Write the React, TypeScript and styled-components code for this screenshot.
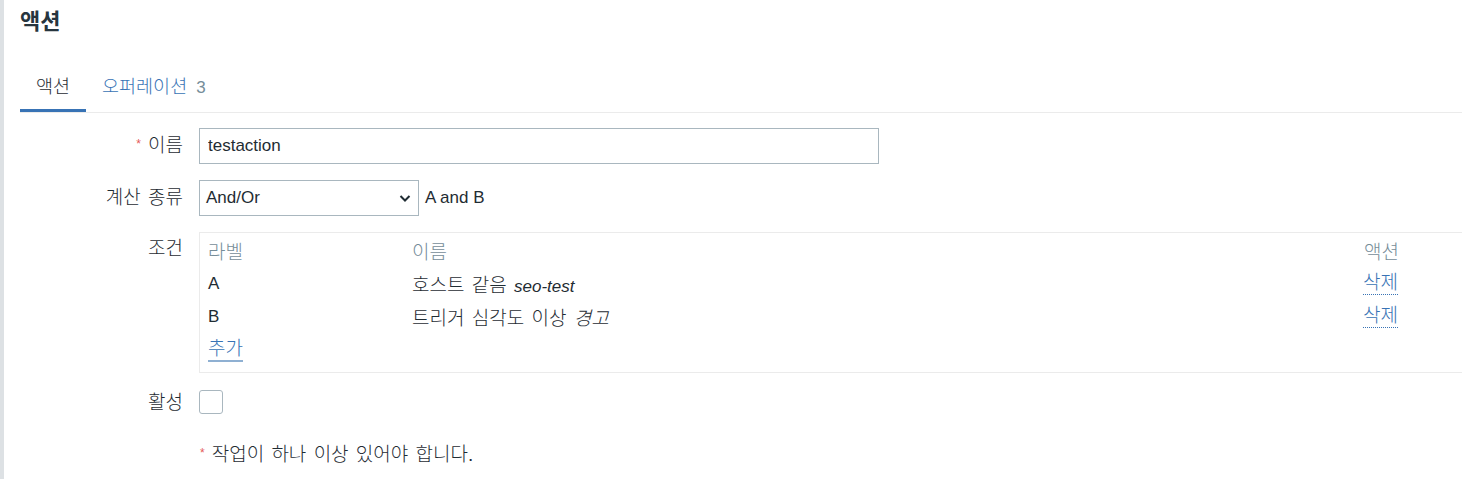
import React from "react";
import styled, { createGlobalStyle } from "styled-components";

const Global = createGlobalStyle`
  html, body { margin: 0; padding: 0; background: #fff; overflow: hidden; }
  body { font-family: "Liberation Sans", Arial, "Noto Sans CJK KR", sans-serif; color: #1f2c33; }
  * { box-sizing: border-box; }
`;

const Page = styled.div`
  display: flex;
  width: 1462px;
  height: 479px;
  overflow: hidden;
`;

const SideStrip = styled.div`
  width: 4px;
  flex: none;
  background: #dde1e4;
`;

const Main = styled.main`
  flex: 1;
  padding-left: 16px;
  min-width: 0;
`;

const Title = styled.h1`
  margin: 0;
  padding-top: 8px;
  height: 70px;
  font-size: 22px;
  line-height: 28px;
  font-weight: 700;
  color: #27353e;
`;

const TabList = styled.div`
  display: flex;
  border-bottom: 1px solid #ebebeb;
  height: 43px;
`;

const Tab = styled.div<{ $active?: boolean }>`
  padding: 0 16px 0 16px;
  font-size: 18.5px;
  font-weight: 300;
  line-height: 34px;
  word-spacing: 4px;
  color: ${(p) => (p.$active ? "#1f2c33" : "#3873b5")};
  border-bottom: 3px solid ${(p) => (p.$active ? "#3873b5" : "transparent")};
  height: 42px;
  white-space: nowrap;
`;

const Latin = styled.span<{ $gray?: boolean }>`
  font-size: 17px;
  font-weight: 400;
  color: ${(p) => (p.$gray ? "#768d99" : "inherit")};
`;

const Form = styled.div`
  display: grid;
  grid-template-columns: 163px 1fr;
  column-gap: 16px;
  row-gap: 16px;
  padding-top: 15px;
  align-items: start;
  font-size: 19px;
`;

const Label = styled.label<{ $h?: number }>`
  text-align: right;
  font-size: 19px;
  font-weight: 300;
  line-height: ${(p) => p.$h ?? 36}px;
  height: ${(p) => p.$h ?? 36}px;
  color: #1f2c33;
  white-space: nowrap;
  word-spacing: 2px;
`;

const Req = styled.span`
  color: #e45959;
  font-size: 12px;
  font-weight: 400;
  line-height: 0;
  position: relative;
  top: -4px;
  margin-right: 7px;
`;

const TextInput = styled.input`
  width: 680px;
  height: 36px;
  border: 1px solid #a9b7bf;
  border-radius: 0;
  padding: 0 8px;
  font-family: inherit;
  font-size: 17px;
  color: #1f2c33;
  outline: none;
  display: block;
`;

const InlineRow = styled.div`
  display: flex;
  align-items: center;
  gap: 6px;
  height: 36px;
`;

const SelectBox = styled.div`
  width: 220px;
  height: 36px;
  border: 1px solid #a9b7bf;
  display: flex;
  align-items: center;
  justify-content: space-between;
  padding: 0 6px 0 6px;
  font-size: 17px;
`;

const Plain = styled.span`
  font-size: 17px;
`;

const CondBox = styled.div`
  width: 1290px;
  height: 141px;
  border: 1px solid #ebebeb;
  border-right: none;
  padding: 0 8px;
`;

const CondRow = styled.div<{ $head?: boolean }>`
  display: grid;
  grid-template-columns: 204px 1fr 117px;
  height: ${(p) => (p.$head ? 34 : 33)}px;
  align-items: center;
  font-size: 19px;
  font-weight: 300;
  word-spacing: 2px;
  color: ${(p) => (p.$head ? "#768d99" : "#1f2c33")};
`;

const Em = styled.i`
  font-style: italic;
`;

const DelLink = styled.span`
  color: #3873b5;
  border-bottom: 1px dotted #3873b5;
  line-height: 22px;
  justify-self: start;
  margin-left: -1px;
`;

const AddLink = styled.span`
  color: #3873b5;
  border-bottom: 2px solid #8fb0d2;
  line-height: 23px;
  justify-self: start;
`;

const Check = styled.span`
  display: block;
  width: 24px;
  height: 24px;
  border: 1px solid #a9b7bf;
  border-radius: 3px;
`;

const Note = styled.div`
  grid-column: 2;
  font-size: 19px;
  font-weight: 300;
  margin-top: 11px;
  line-height: 26px;
  padding-left: 1px;
  word-spacing: 2px;
`;

export default function App() {
  return (
    <>
      <Global />
      <Page>
        <SideStrip />
        <Main>
          <Title>액션</Title>
          <TabList>
            <Tab $active>액션</Tab>
            <Tab>
              오퍼레이션 <Latin $gray>3</Latin>
            </Tab>
          </TabList>
          <Form>
            <Label>
              <Req>*</Req>이름
            </Label>
            <TextInput defaultValue="testaction" />

            <Label>계산 종류</Label>
            <InlineRow>
              <SelectBox>
                <span>And/Or</span>
                <svg width="14" height="14" viewBox="0 0 14 14">
                  <path d="M2.5 5 L7 9.5 L11.5 5" fill="none" stroke="#1f2c33" strokeWidth="2" />
                </svg>
              </SelectBox>
              <Plain>A and B</Plain>
            </InlineRow>

            <Label $h={34}>조건</Label>
            <CondBox>
              <CondRow $head>
                <span>라벨</span>
                <span>이름</span>
                <span>액션</span>
              </CondRow>
              <CondRow>
                <Latin>A</Latin>
                <span>
                  호스트 같음 <Latin><Em>seo-test</Em></Latin>
                </span>
                <DelLink>삭제</DelLink>
              </CondRow>
              <CondRow>
                <Latin>B</Latin>
                <span>
                  트리거 심각도 이상 <Em>경고</Em>
                </span>
                <DelLink>삭제</DelLink>
              </CondRow>
              <CondRow>
                <AddLink>추가</AddLink>
              </CondRow>
            </CondBox>

            <Label $h={24} style={{ marginTop: 2 }}>활성</Label>
            <Check style={{ marginTop: 1 }} />

            <Note>
              <Req>*</Req>작업이 하나 이상 있어야 합니다.
            </Note>
          </Form>
        </Main>
      </Page>
    </>
  );
}
